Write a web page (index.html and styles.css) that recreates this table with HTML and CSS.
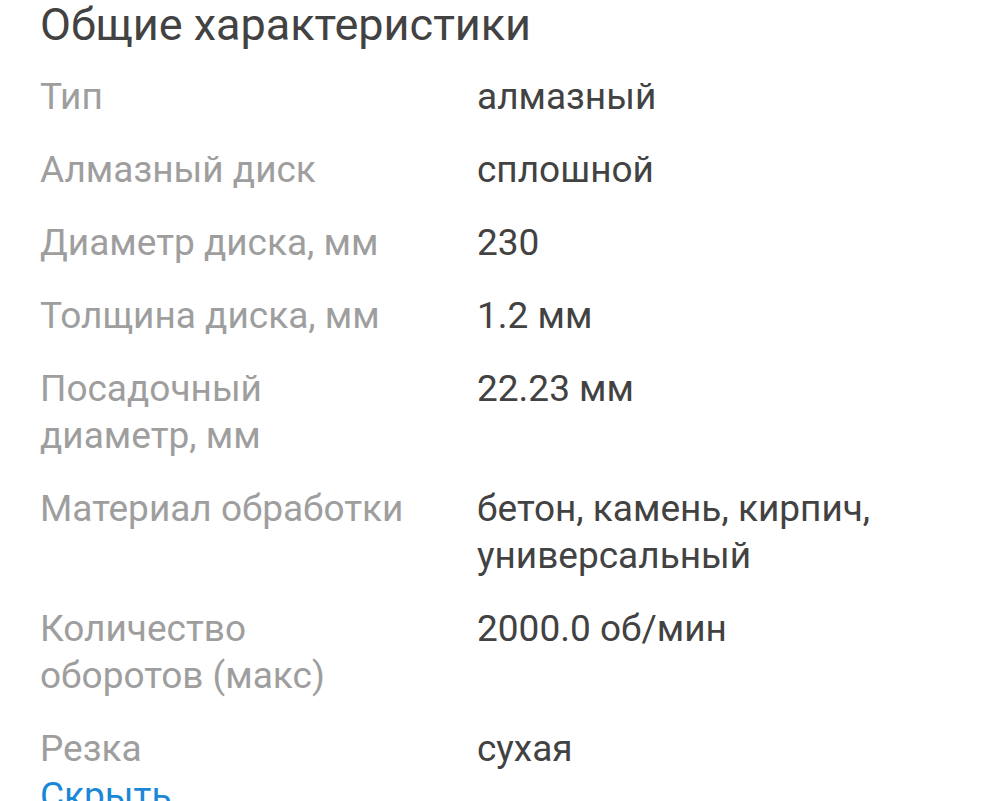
FILE: index.html
```html
<!DOCTYPE html>
<html lang="ru">
<head>
<meta charset="utf-8">
<link rel="stylesheet" href="styles.css">
</head>
<body>
<section class="specs">
  <h2 class="specs-title">Общие характеристики</h2>
  <dl class="specs-list">
    <dt>Тип</dt><dd>алмазный</dd>
    <dt>Алмазный диск</dt><dd>сплошной</dd>
    <dt>Диаметр диска, мм</dt><dd>230</dd>
    <dt>Толщина диска, мм</dt><dd>1.2 мм</dd>
    <dt>Посадочный диаметр, мм</dt><dd>22.23 мм</dd>
    <dt>Материал обработки</dt><dd>бетон, камень, кирпич, универсальный</dd>
    <dt>Количество оборотов (макс)</dt><dd>2000.0 об/мин</dd>
    <dt>Резка</dt><dd>сухая</dd>
  </dl>
  <a class="specs-toggle" href="#">Скрыть</a>
</section>
</body>
</html>
```

FILE: styles.css
```css
html, body {
  margin: 0;
  padding: 0;
  background: #ffffff;
}
body {
  font-family: Roboto, "Noto Sans", sans-serif;
  overflow: hidden;
}
.specs {
  padding: 0 40px;
  width: 920px;
}
.specs-title {
  margin: 0;
  font-size: 45px;
  font-weight: 400;
  line-height: 50px;
  color: #424242;
}
.specs-list {
  margin: 23px 0 0;
  display: grid;
  grid-template-columns: 370px 1fr;
  column-gap: 67px;
  row-gap: 26px;
  font-size: 37px;
  line-height: 47px;
}
.specs-list dt {
  color: #9e9e9e;
}
.specs-list dd {
  margin: 0;
  color: #424242;
}
.specs-toggle {
  display: block;
  font-size: 37px;
  line-height: 47px;
  color: #1a88d6;
  text-decoration: none;
}
```
